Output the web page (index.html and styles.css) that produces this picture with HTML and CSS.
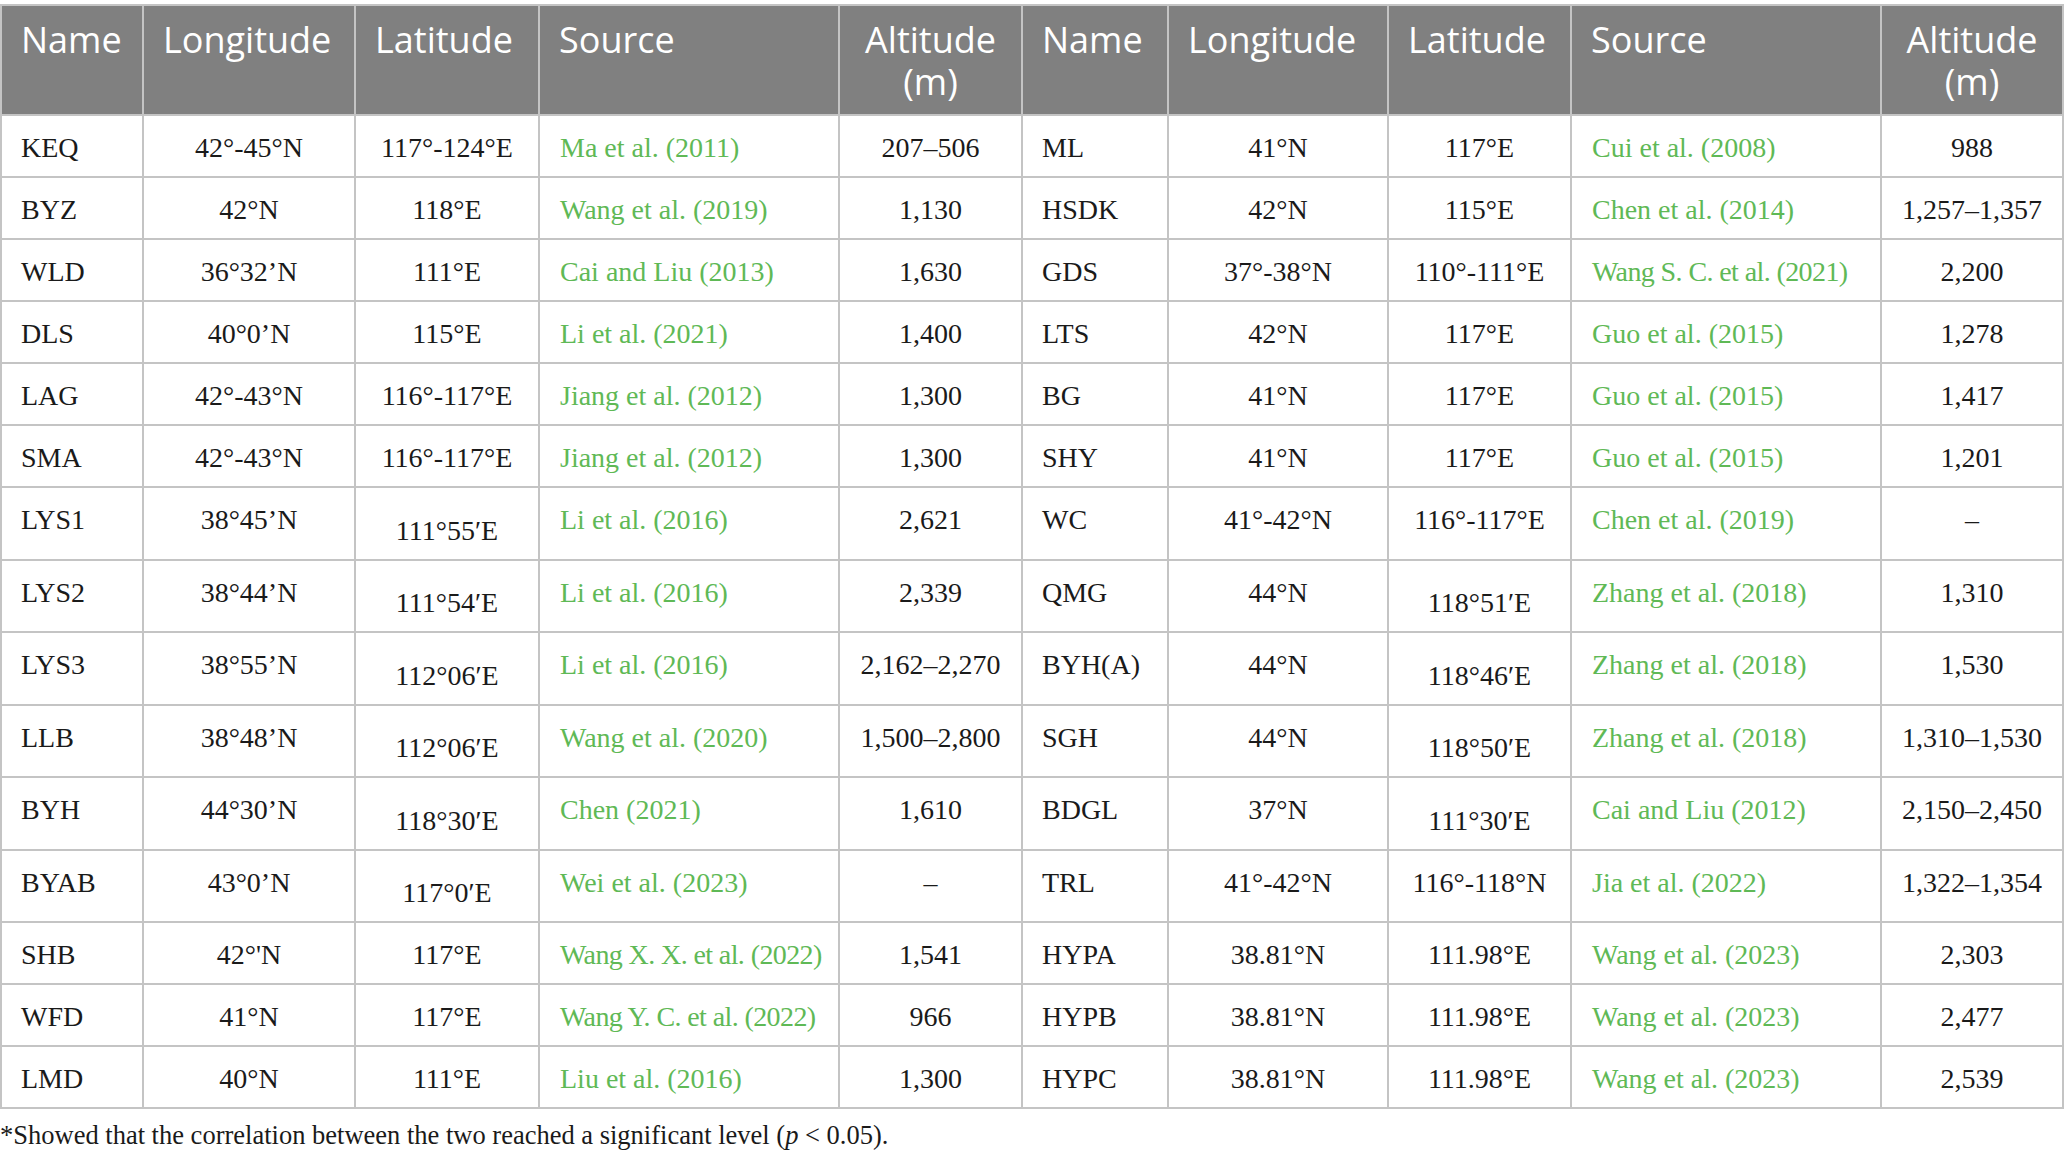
FILE: index.html
```html
<!DOCTYPE html>
<html lang="en">
<head>
<meta charset="utf-8">
<title>Sites</title>
<link rel="stylesheet" href="styles.css">
</head>
<body>
<table class="data">
<colgroup>
<col class="c1"><col class="c2"><col class="c3"><col class="c4"><col class="c5">
<col class="c6"><col class="c7"><col class="c8"><col class="c9"><col class="c10">
</colgroup>
<thead>
<tr>
<th>Name</th><th>Longitude</th><th>Latitude</th><th>Source</th><th class="ctr">Altitude<br>(m)</th>
<th>Name</th><th>Longitude</th><th>Latitude</th><th>Source</th><th class="ctr">Altitude<br>(m)</th>
</tr>
</thead>
<tbody>
<tr><td>KEQ</td><td class="ctr">42°-45°N</td><td class="ctr">117°-124°E</td><td class="src">Ma et al. (2011)</td><td class="ctr">207–506</td>
<td>ML</td><td class="ctr">41°N</td><td class="ctr">117°E</td><td class="src">Cui et al. (2008)</td><td class="ctr">988</td></tr>
<tr><td>BYZ</td><td class="ctr">42°N</td><td class="ctr">118°E</td><td class="src">Wang et al. (2019)</td><td class="ctr">1,130</td>
<td>HSDK</td><td class="ctr">42°N</td><td class="ctr">115°E</td><td class="src">Chen et al. (2014)</td><td class="ctr">1,257–1,357</td></tr>
<tr><td>WLD</td><td class="ctr">36°32’N</td><td class="ctr">111°E</td><td class="src">Cai and Liu (2013)</td><td class="ctr">1,630</td>
<td>GDS</td><td class="ctr">37°-38°N</td><td class="ctr">110°-111°E</td><td class="src tight">Wang S. C. et al. (2021)</td><td class="ctr">2,200</td></tr>
<tr><td>DLS</td><td class="ctr">40°0’N</td><td class="ctr">115°E</td><td class="src">Li et al. (2021)</td><td class="ctr">1,400</td>
<td>LTS</td><td class="ctr">42°N</td><td class="ctr">117°E</td><td class="src">Guo et al. (2015)</td><td class="ctr">1,278</td></tr>
<tr><td>LAG</td><td class="ctr">42°-43°N</td><td class="ctr">116°-117°E</td><td class="src">Jiang et al. (2012)</td><td class="ctr">1,300</td>
<td>BG</td><td class="ctr">41°N</td><td class="ctr">117°E</td><td class="src">Guo et al. (2015)</td><td class="ctr">1,417</td></tr>
<tr><td>SMA</td><td class="ctr">42°-43°N</td><td class="ctr">116°-117°E</td><td class="src">Jiang et al. (2012)</td><td class="ctr">1,300</td>
<td>SHY</td><td class="ctr">41°N</td><td class="ctr">117°E</td><td class="src">Guo et al. (2015)</td><td class="ctr">1,201</td></tr>
<tr><td>LYS1</td><td class="ctr">38°45’N</td><td class="ctr lo">111°55′E</td><td class="src">Li et al. (2016)</td><td class="ctr">2,621</td>
<td>WC</td><td class="ctr">41°-42°N</td><td class="ctr">116°-117°E</td><td class="src">Chen et al. (2019)</td><td class="ctr">–</td></tr>
<tr><td>LYS2</td><td class="ctr">38°44’N</td><td class="ctr lo">111°54′E</td><td class="src">Li et al. (2016)</td><td class="ctr">2,339</td>
<td>QMG</td><td class="ctr">44°N</td><td class="ctr lo">118°51′E</td><td class="src">Zhang et al. (2018)</td><td class="ctr">1,310</td></tr>
<tr><td>LYS3</td><td class="ctr">38°55’N</td><td class="ctr lo">112°06′E</td><td class="src">Li et al. (2016)</td><td class="ctr">2,162–2,270</td>
<td>BYH(A)</td><td class="ctr">44°N</td><td class="ctr lo">118°46′E</td><td class="src">Zhang et al. (2018)</td><td class="ctr">1,530</td></tr>
<tr><td>LLB</td><td class="ctr">38°48’N</td><td class="ctr lo">112°06′E</td><td class="src">Wang et al. (2020)</td><td class="ctr">1,500–2,800</td>
<td>SGH</td><td class="ctr">44°N</td><td class="ctr lo">118°50′E</td><td class="src">Zhang et al. (2018)</td><td class="ctr">1,310–1,530</td></tr>
<tr><td>BYH</td><td class="ctr">44°30’N</td><td class="ctr lo">118°30′E</td><td class="src">Chen (2021)</td><td class="ctr">1,610</td>
<td>BDGL</td><td class="ctr">37°N</td><td class="ctr lo">111°30′E</td><td class="src">Cai and Liu (2012)</td><td class="ctr">2,150–2,450</td></tr>
<tr><td>BYAB</td><td class="ctr">43°0’N</td><td class="ctr lo">117°0′E</td><td class="src">Wei et al. (2023)</td><td class="ctr">–</td>
<td>TRL</td><td class="ctr">41°-42°N</td><td class="ctr">116°-118°N</td><td class="src">Jia et al. (2022)</td><td class="ctr">1,322–1,354</td></tr>
<tr><td>SHB</td><td class="ctr">42°'N</td><td class="ctr">117°E</td><td class="src tight">Wang X. X. et al. (2022)</td><td class="ctr">1,541</td>
<td>HYPA</td><td class="ctr">38.81°N</td><td class="ctr">111.98°E</td><td class="src">Wang et al. (2023)</td><td class="ctr">2,303</td></tr>
<tr><td>WFD</td><td class="ctr">41°N</td><td class="ctr">117°E</td><td class="src tight">Wang Y. C. et al. (2022)</td><td class="ctr">966</td>
<td>HYPB</td><td class="ctr">38.81°N</td><td class="ctr">111.98°E</td><td class="src">Wang et al. (2023)</td><td class="ctr">2,477</td></tr>
<tr><td>LMD</td><td class="ctr">40°N</td><td class="ctr">111°E</td><td class="src">Liu et al. (2016)</td><td class="ctr">1,300</td>
<td>HYPC</td><td class="ctr">38.81°N</td><td class="ctr">111.98°E</td><td class="src">Wang et al. (2023)</td><td class="ctr">2,539</td></tr>
</tbody>
</table>
<p class="note">*Showed that the correlation between the two reached a significant level (<i>p</i> &lt; 0.05).</p>
</body>
</html>
```
FILE: styles.css
```css
html, body {
  margin: 0;
  padding: 0;
  background: #ffffff;
}

body {
  font-family: "Liberation Serif", "Times New Roman", serif;
  color: #1a1a1a;
}

.data {
  margin-top: 4px;
  width: 2064px;
  table-layout: fixed;
  border-collapse: separate;
  border-spacing: 0;
  border-top: 2px solid #c4c4c4;
  border-left: 2px solid #c4c4c4;
}

.c1 { width: 142px; }
.c2 { width: 212px; }
.c3 { width: 184px; }
.c4 { width: 300px; }
.c5 { width: 183px; }
.c6 { width: 146px; }
.c7 { width: 220px; }
.c8 { width: 183px; }
.c9 { width: 310px; }
.c10 { width: 182px; }

.data th,
.data td {
  box-sizing: border-box;
  border-right: 2px solid #c4c4c4;
  border-bottom: 2px solid #c4c4c4;
  vertical-align: top;
  white-space: nowrap;
}

.data th {
  background: #808080;
  color: #ffffff;
  font-family: "Open Sans", "Liberation Sans", sans-serif;
  font-weight: 400;
  font-size: 36px;
  line-height: 42px;
  text-align: left;
  padding: 13px 8px 11px 19px;
}

.data th.ctr {
  text-align: center;
  padding-left: 8px;
}

.data td {
  font-size: 28px;
  line-height: 31px;
  padding: 16px 8px 13px 19px;
  text-align: left;
}

.data td.ctr {
  text-align: center;
  padding-left: 8px;
}

.data td.lo {
  padding-top: 26.5px;
}

.data td.src {
  color: #5fb956;
  padding-left: 20px;
}

.data td.tight {
  letter-spacing: -0.6px;
}

.note {
  margin: 10px 0 0 0;
  font-size: 26.5px;
  line-height: 32px;
  color: #1a1a1a;
}
```
